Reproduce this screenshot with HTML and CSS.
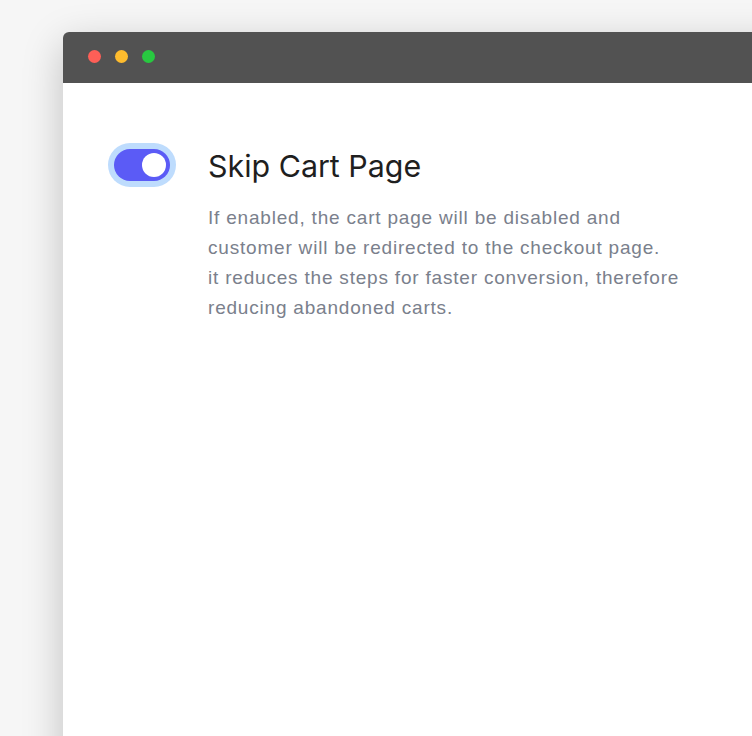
FILE: index.html
```html
<!DOCTYPE html>
<html lang="en">

<head>
    <meta charset="UTF-8">
    <meta name="viewport" content="width=device-width, initial-scale=1.0">
    <title>Skip Cart Page</title>
    <link rel="stylesheet" href="styles.css">
</head>

<body>
    <div class="window">
        <div class="title-bar">
            <span class="dot dot-red"></span>
            <span class="dot dot-yellow"></span>
            <span class="dot dot-green"></span>
        </div>
        <div class="window-body">
            <div class="setting">
                <label class="toggle">
                    <input type="checkbox" checked>
                    <span class="track"><span class="knob"></span></span>
                </label>
                <div class="setting-text">
                    <h2>Skip Cart Page</h2>
                    <p>If enabled, the cart page will be disabled and customer will be redirected to the checkout page.<br>it reduces the steps for faster conversion, therefore reducing abandoned carts.</p>
                </div>
            </div>
        </div>
    </div>
</body>

</html>
```

FILE: styles.css
```css
html,
body {
    margin: 0;
    height: 100%;
    overflow: hidden;
}

body {
    background: #f6f6f6;
    font-family: Inter, 'Liberation Sans', Arial, sans-serif;
}

.window {
    margin: 32px 0 0 63px;
    width: 800px;
    height: 760px;
    background: #fff;
    border-radius: 6px 6px 0 0;
    box-shadow: 0 12px 40px rgba(0, 0, 0, 0.22);
    overflow: hidden;
}

.title-bar {
    height: 51px;
    background: #525252;
    display: flex;
    align-items: center;
    gap: 14px;
    padding: 0 0 2px 25px;
    box-sizing: border-box;
}

.dot {
    width: 13px;
    height: 13px;
    border-radius: 50%;
}

.dot-red {
    background: #fe5f57;
}

.dot-yellow {
    background: #febc2e;
}

.dot-green {
    background: #28c840;
}

.window-body {
    padding: 66px 0 0 51px;
}

.setting {
    display: flex;
    align-items: flex-start;
    gap: 38px;
}

.toggle input {
    display: none;
}

.toggle .track {
    display: block;
    width: 56px;
    height: 32px;
    border-radius: 16px;
    background: #5b5bf6;
    box-shadow: 0 0 0 6px #bedcfd;
    position: relative;
    cursor: pointer;
}

.toggle .knob {
    position: absolute;
    top: 4px;
    right: 4px;
    width: 24px;
    height: 24px;
    border-radius: 50%;
    background: #fff;
}

.setting-text h2 {
    margin: -3px 0 0 0;
    font-size: 30.4px;
    font-weight: 400;
    color: #1f1f1f;
    line-height: 40px;
}

.setting-text p {
    margin: 17px 0 0 0;
    width: 485px;
    font-family: 'Liberation Sans', Arial, sans-serif;
    font-size: 19px;
    letter-spacing: 0.8px;
    line-height: 30px;
    color: #7a808c;
}
```
